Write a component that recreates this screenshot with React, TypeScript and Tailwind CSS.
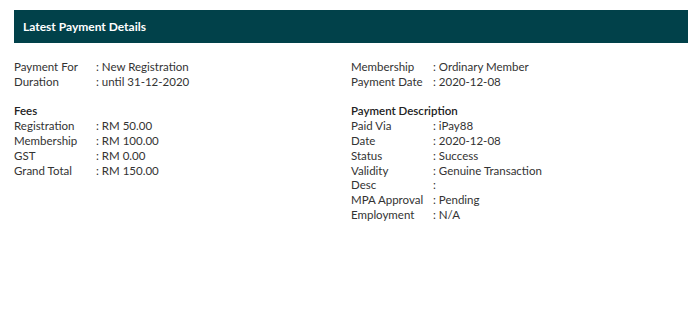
const left = [
  { k: "Payment For", v: "New Registration" },
  { k: "Duration", v: "until 31-12-2020" },
];
const right = [
  { k: "Membership", v: "Ordinary Member" },
  { k: "Payment Date", v: "2020-12-08" },
];
const fees = [
  { k: "Registration", v: "RM 50.00" },
  { k: "Membership", v: "RM 100.00" },
  { k: "GST", v: "RM 0.00" },
  { k: "Grand Total", v: "RM 150.00" },
];
const desc = [
  { k: "Paid Via", v: "iPay88" },
  { k: "Date", v: "2020-12-08" },
  { k: "Status", v: "Success" },
  { k: "Validity", v: "Genuine Transaction" },
  { k: "Desc", v: "" },
  { k: "MPA Approval", v: "Pending" },
  { k: "Employment", v: "N/A" },
];

const Rows = ({ rows }: { rows: { k: string; v: string }[] }) => (
  <div>
    {rows.map((r, i) => (
      <div key={i} className="flex h-[14.8px] items-center">
        <span className="w-[82px] shrink-0">{r.k}</span>
        <span>: {r.v}</span>
      </div>
    ))}
  </div>
);

export default function App() {
  return (
    <div className="h-[334px] w-[698px] bg-white pl-[14px] pr-[10px] pt-[10px] text-[11.5px] text-[#333] [font-family:Lato,'Open_Sans',sans-serif]">
      <div className="flex h-[33px] items-center bg-[#01414a] pl-[9px] text-[12px] font-bold text-white">
        Latest Payment Details
      </div>
      <div className="grid grid-cols-2 pt-[16px]">
        <div>
          <Rows rows={left} />
          <div className="mt-[15px] flex h-[14.8px] items-center font-semibold text-[#222]">Fees</div>
          <Rows rows={fees} />
        </div>
        <div>
          <Rows rows={right} />
          <div className="mt-[15px] flex h-[14.8px] items-center font-semibold text-[#222]">Payment Description</div>
          <Rows rows={desc} />
        </div>
      </div>
    </div>
  );
}
